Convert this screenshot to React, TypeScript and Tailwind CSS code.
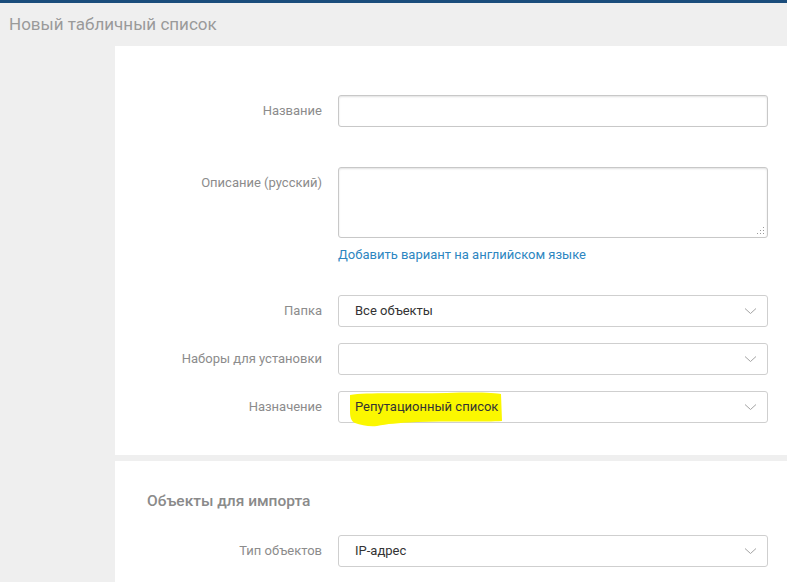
import React from 'react';

const Chevron: React.FC = () => (
  <svg width="13" height="7" viewBox="0 0 13 7" className="absolute right-[10px] top-1/2 -translate-y-1/2">
    <path d="M1 1 L6.5 6 L12 1" fill="none" stroke="#a3a3a3" strokeWidth="1" />
  </svg>
);

const Row: React.FC<{ label: string; children: React.ReactNode; className?: string }> = ({ label, children, className }) => (
  <div className={`flex items-start ${className ?? ''}`}>
    <div className="w-[223px] shrink-0 pr-[16px] text-right text-[13px] text-[#8c8c8c] leading-[31px]">{label}</div>
    <div className="w-[430px] shrink-0">{children}</div>
  </div>
);

const Select: React.FC<{ value?: string; highlight?: boolean }> = ({ value, highlight }) => (
  <div className="relative h-[32px] rounded-[3px] border border-[#cfcfcf] bg-white pl-[16px] flex items-center text-[13px] text-[#333]">
    {highlight && (
      <svg width="160" height="36" viewBox="0 0 160 36" className="absolute left-[8px] top-[-1px]">
        <path
          d="M3 4 C20 1 60 3 100 2 C130 1 150 2 154 3 L155 30 C140 31 100 30 70 31 C50 32 40 33 30 35 C22 36 14 34 8 32 C4 30 3 26 3 20 Z"
          fill="#fbf700"
        />
      </svg>
    )}
    <span className="relative">{value}</span>
    <Chevron />
  </div>
);

export default function App() {
  return (
    <div className="w-[787px] h-[582px] overflow-hidden bg-[#efefef] font-['Roboto','Liberation_Sans',sans-serif]">
      <div className="h-[3px] bg-[#1b4d7c]" />
      <div className="h-[43px] flex items-center pl-[9px] text-[17px] text-[#9a9a9a]">Новый табличный список</div>
      <div className="ml-[115px]">
        <div className="bg-white h-[409px] pt-[49px]">
          <Row label="Название">
            <div className="h-[32px] rounded-[3px] border border-[#c8c8c8] bg-white shadow-[inset_0_1px_2px_rgba(0,0,0,0.12)]" />
          </Row>
          <Row label="Описание (русский)" className="mt-[40px]">
            <div className="relative h-[71px] rounded-[3px] border border-[#c8c8c8] bg-white shadow-[inset_0_1px_2px_rgba(0,0,0,0.12)]">
              <svg width="8" height="8" viewBox="0 0 8 8" className="absolute right-[2px] bottom-[2px]">
                <g fill="#9a9a9a">
                  <rect x="6" y="0" width="1" height="1" />
                  <rect x="3" y="3" width="1" height="1" />
                  <rect x="6" y="3" width="1" height="1" />
                  <rect x="0" y="6" width="1" height="1" />
                  <rect x="3" y="6" width="1" height="1" />
                  <rect x="6" y="6" width="1" height="1" />
                </g>
              </svg>
            </div>
            <div className="mt-[7px] text-[13px] text-[#2d86c1]">Добавить вариант на английском языке</div>
          </Row>
          <Row label="Папка" className="mt-[30px]">
            <Select value="Все объекты" />
          </Row>
          <Row label="Наборы для установки" className="mt-[16px]">
            <Select />
          </Row>
          <Row label="Назначение" className="mt-[16px]">
            <Select value="Репутационный список" highlight />
          </Row>
        </div>
        <div className="bg-white mt-[6px] h-[200px] pt-[31px]">
          <div className="pl-[32px] text-[15.5px] font-medium text-[#8a8a8a] leading-[18px]">Объекты для импорта</div>
          <Row label="Тип объектов" className="mt-[25px]">
            <Select value="IP-адрес" />
          </Row>
        </div>
      </div>
    </div>
  );
}
